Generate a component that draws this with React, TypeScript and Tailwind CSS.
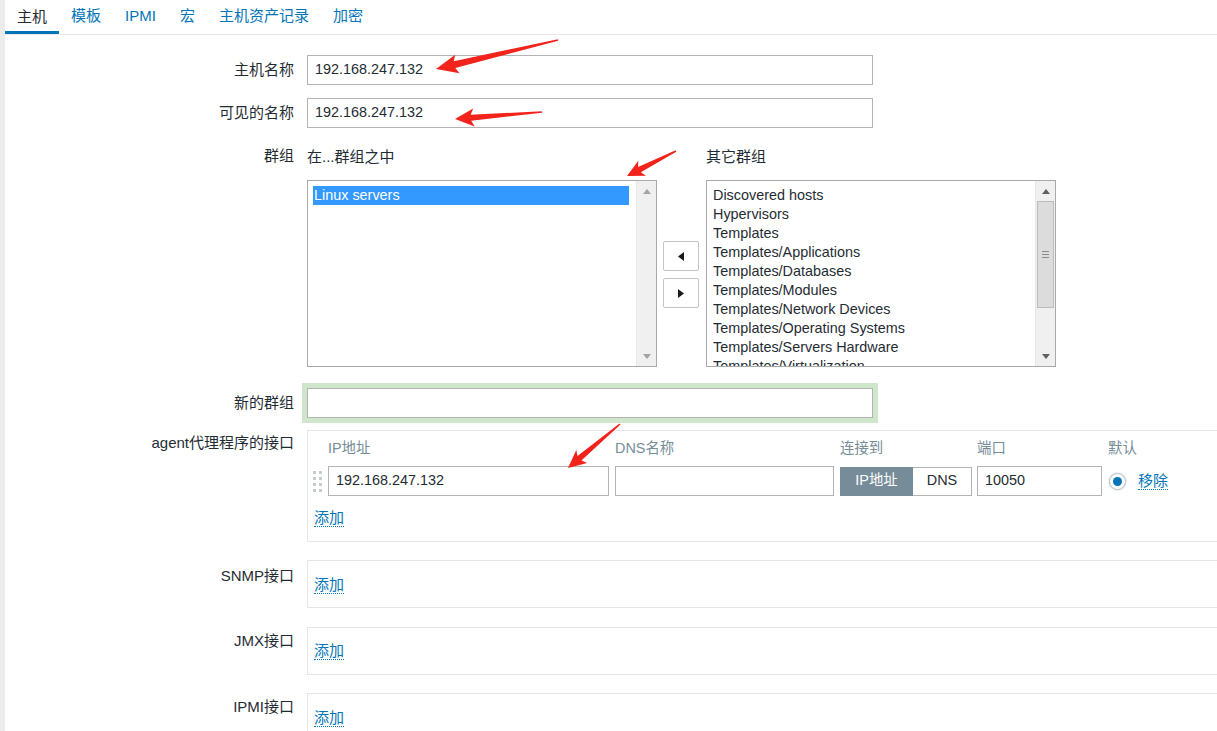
import React from 'react';

type Pt = [number, number];

// red annotation arrow, polygon from tail to tip
function arrowPoints(tail: Pt, tip: Pt, headLen: number, headW: number, tailW: number, shaftW: number) {
    const dx = tip[0] - tail[0];
    const dy = tip[1] - tail[1];
    const len = Math.hypot(dx, dy);
    const ux = dx / len;
    const uy = dy / len;
    const nx = -uy;
    const ny = ux;
    const bx = tip[0] - ux * headLen;
    const by = tip[1] - uy * headLen;
    const p = (x: number, y: number, w: number) => `${(x + nx * w).toFixed(1)},${(y + ny * w).toFixed(1)}`;
    return [
        p(tail[0], tail[1], tailW / 2),
        p(bx, by, shaftW / 2),
        p(bx - ux * 3, by - uy * 3, headW / 2),
        `${tip[0]},${tip[1]}`,
        p(bx - ux * 3, by - uy * 3, -headW / 2),
        p(bx, by, -shaftW / 2),
        p(tail[0], tail[1], -tailW / 2),
    ].join(' ');
}

const arrows = [
    arrowPoints([558, 40], [436, 69], 19, 19, 1.5, 7),
    arrowPoints([542, 112], [455, 119], 16, 18, 1.5, 6),
    arrowPoints([676, 151], [627, 176], 14, 17, 1.5, 6),
    arrowPoints([620, 424], [568, 468], 15, 17, 1.5, 6),
];

const tabs = ['主机', '模板', 'IPMI', '宏', '主机资产记录', '加密'];

const otherGroups = [
    'Discovered hosts',
    'Hypervisors',
    'Templates',
    'Templates/Applications',
    'Templates/Databases',
    'Templates/Modules',
    'Templates/Network Devices',
    'Templates/Operating Systems',
    'Templates/Servers Hardware',
    'Templates/Virtualization',
];

const input = 'h-[30px] border border-[#b3b3b3] bg-white px-[7px] flex items-center text-[#1f2c33]';
const label = 'w-[289px] shrink-0 text-right text-[15px] text-[#1f2c33]';
const link = 'text-[15px] text-[#0275b8] border-b border-dotted border-[#0275b8] leading-[17px]';
const ifaceBox = 'ml-[13px] w-[960px] shrink-0 border border-[#e3e6e8] bg-white';

function Scrollbar({ thumb }: { thumb?: boolean }) {
    return (
        <div className="flex w-[20px] flex-col border-l border-[#e8e8e8] bg-[#f0f0f0]">
            <div className="flex h-[20px] items-center justify-center">
                <svg width="8" height="5" viewBox="0 0 8 5">
                    <path d="M0 5 L4 0 L8 5 Z" fill={thumb ? '#606060' : '#a3a3a3'} />
                </svg>
            </div>
            <div className="flex-1 px-[1px]">
                {thumb && (
                    <div className="flex h-[107px] items-center justify-center border border-[#bcbcbc] bg-[#dcdcdc]">
                        <div className="flex flex-col gap-[2px]">
                            <div className="h-px w-[7px] bg-[#8a8a8a]" />
                            <div className="h-px w-[7px] bg-[#8a8a8a]" />
                            <div className="h-px w-[7px] bg-[#8a8a8a]" />
                        </div>
                    </div>
                )}
            </div>
            <div className="flex h-[20px] items-center justify-center">
                <svg width="8" height="5" viewBox="0 0 8 5">
                    <path d="M0 0 L8 0 L4 5 Z" fill={thumb ? '#606060' : '#a3a3a3'} />
                </svg>
            </div>
        </div>
    );
}

function AddRow({ pt, labelText, lpt }: { pt: string; labelText: string; lpt: string }) {
    return (
        <>
            <div className={`${label} ${lpt} leading-[18px]`}>{labelText}</div>
            <div className={`${ifaceBox} h-[48px] pl-[6px] ${pt}`}>
                <span className={link}>添加</span>
            </div>
        </>
    );
}

export default function App() {
    return (
        <div
            className="relative h-[731px] w-[1217px] overflow-hidden border-l-[5px] border-[#ebebeb] bg-white text-[14.4px]"
            style={{ fontFamily: '"Liberation Sans", "Noto Sans CJK SC", sans-serif' }}
        >
            {/* tabs */}
            <div className="flex h-[35px] border-b border-[#e6e9eb] text-[15px]">
                {tabs.map((t, i) => (
                    <div
                        key={t}
                        className={
                            i === 0
                                ? 'flex items-center border-b-[3px] border-[#0275b8] px-3 pt-[3px] text-[#1f2c33]'
                                : 'flex items-center px-3 pb-[1px] text-[#0275b8]'
                        }
                    >
                        {t}
                    </div>
                ))}
            </div>

            <div className="pt-[20px]">
                {/* host name */}
                <div className="flex h-[30px] items-center">
                    <div className={label}>主机名称</div>
                    <div className={`${input} ml-[13px] w-[566px]`}>192.168.247.132</div>
                </div>
                <div className="mt-[13px] flex h-[30px] items-center">
                    <div className={label}>可见的名称</div>
                    <div className={`${input} ml-[13px] w-[566px]`}>192.168.247.132</div>
                </div>

                {/* groups */}
                <div className="mt-[13px] flex">
                    <div className={`${label} pt-[6px] leading-[18px]`}>群组</div>
                    <div className="ml-[13px]">
                        <div className="flex pt-[7px] text-[15px] leading-[18px] text-[#1f2c33]">
                            <div className="w-[399px]">在...群组之中</div>
                            <div>其它群组</div>
                        </div>
                        <div className="mt-[14px] flex">
                            <div className="flex h-[187px] w-[350px] border border-[#a9a9a9] bg-white">
                                <div className="flex-1 pt-[5px] pl-[5px] pr-[7px]">
                                    <div className="h-[19px] bg-[#3399ff] px-[1px] leading-[19px] text-white">Linux servers</div>
                                </div>
                                <Scrollbar />
                            </div>
                            <div className="flex w-[49px] flex-col justify-center gap-[7px] pl-[6px] pt-[2px]">
                                <div className="flex h-[30px] w-[36px] items-center justify-center rounded-[2px] border border-[#c4c4c4] bg-white">
                                    <svg width="6" height="9" viewBox="0 0 6 9">
                                        <path d="M6 0 L6 9 L0 4.5 Z" fill="#1a1a1a" />
                                    </svg>
                                </div>
                                <div className="flex h-[30px] w-[36px] items-center justify-center rounded-[2px] border border-[#c4c4c4] bg-white">
                                    <svg width="6" height="9" viewBox="0 0 6 9">
                                        <path d="M0 0 L0 9 L6 4.5 Z" fill="#1a1a1a" />
                                    </svg>
                                </div>
                            </div>
                            <div className="flex h-[187px] w-[350px] overflow-hidden border border-[#a9a9a9] bg-white">
                                <div className="flex-1 overflow-hidden pt-[5px] pl-[6px] text-[#1f2c33]">
                                    {otherGroups.map((g) => (
                                        <div key={g} className="h-[19px] whitespace-nowrap leading-[19px]">
                                            {g}
                                        </div>
                                    ))}
                                </div>
                                <Scrollbar thumb />
                            </div>
                        </div>
                    </div>
                </div>

                {/* new group */}
                <div className="mt-[21px] flex h-[30px] items-center">
                    <div className={label}>新的群组</div>
                    <div className={`${input} ml-[13px] w-[566px] shadow-[0_0_0_5px_#cfe5cc]`} />
                </div>

                {/* agent interfaces */}
                <div className="mt-[12px] flex">
                    <div className={`${label} pt-[4px] leading-[18px]`}>agent代理程序的接口</div>
                    <div className={`${ifaceBox} h-[112px] pl-[5px] pt-[8px]`}>
                        <div className="grid grid-cols-[15px_287px_225px_137px_131px_auto] leading-[18px] text-[#768d99]">
                            <div />
                            <div>IP地址</div>
                            <div>DNS名称</div>
                            <div>连接到</div>
                            <div>端口</div>
                            <div>默认</div>
                        </div>
                        <div className="mt-[9px] grid grid-cols-[15px_287px_225px_137px_131px_auto] items-center">
                            <div className="grid w-[9px] grid-cols-2 gap-[3px]">
                                {Array.from({ length: 8 }).map((_, i) => (
                                    <div key={i} className="h-[3px] w-[3px] bg-[#c5ccd0]" />
                                ))}
                            </div>
                            <div className={`${input} h-[29px] w-[281px]`}>192.168.247.132</div>
                            <div className={`${input} h-[29px] w-[219px]`} />
                            <div className="flex h-[29px] w-[132px]">
                                <div className="flex w-[73px] items-center justify-center bg-[#768d99] text-white">IP地址</div>
                                <div className="flex flex-1 items-center justify-center border border-l-0 border-[#b3b3b3] bg-white text-[#1f2c33]">
                                    DNS
                                </div>
                            </div>
                            <div className={`${input} h-[29px] w-[125px]`}>10050</div>
                            <div className="flex items-center pl-[1px]">
                                <div className="flex h-[17px] w-[17px] items-center justify-center rounded-full border border-[#b8c4cb] bg-white shadow-[0_0_2px_#b8c4cb]">
                                    <div className="h-[9px] w-[9px] rounded-full bg-[#0275b8]" />
                                </div>
                                <span className={`${link} ml-[12px]`}>移除</span>
                            </div>
                        </div>
                        <div className="mt-[12px] pl-[1px]">
                            <span className={link}>添加</span>
                        </div>
                    </div>
                </div>

                <div className="mt-[18px] flex">
                    <AddRow labelText="SNMP接口" lpt="pt-[7px]" pt="pt-[14px]" />
                </div>
                <div className="mt-[19px] flex">
                    <AddRow labelText="JMX接口" lpt="pt-[5px]" pt="pt-[13px]" />
                </div>
                <div className="mt-[18px] flex">
                    <AddRow labelText="IPMI接口" lpt="pt-[5px]" pt="pt-[14px]" />
                </div>
            </div>

            {/* red annotation arrows */}
            <svg className="pointer-events-none absolute top-0 left-[-5px]" width="1217" height="731">
                {arrows.map((pts, i) => (
                    <polygon key={i} points={pts} fill="#f2231a" />
                ))}
            </svg>
        </div>
    );
}
